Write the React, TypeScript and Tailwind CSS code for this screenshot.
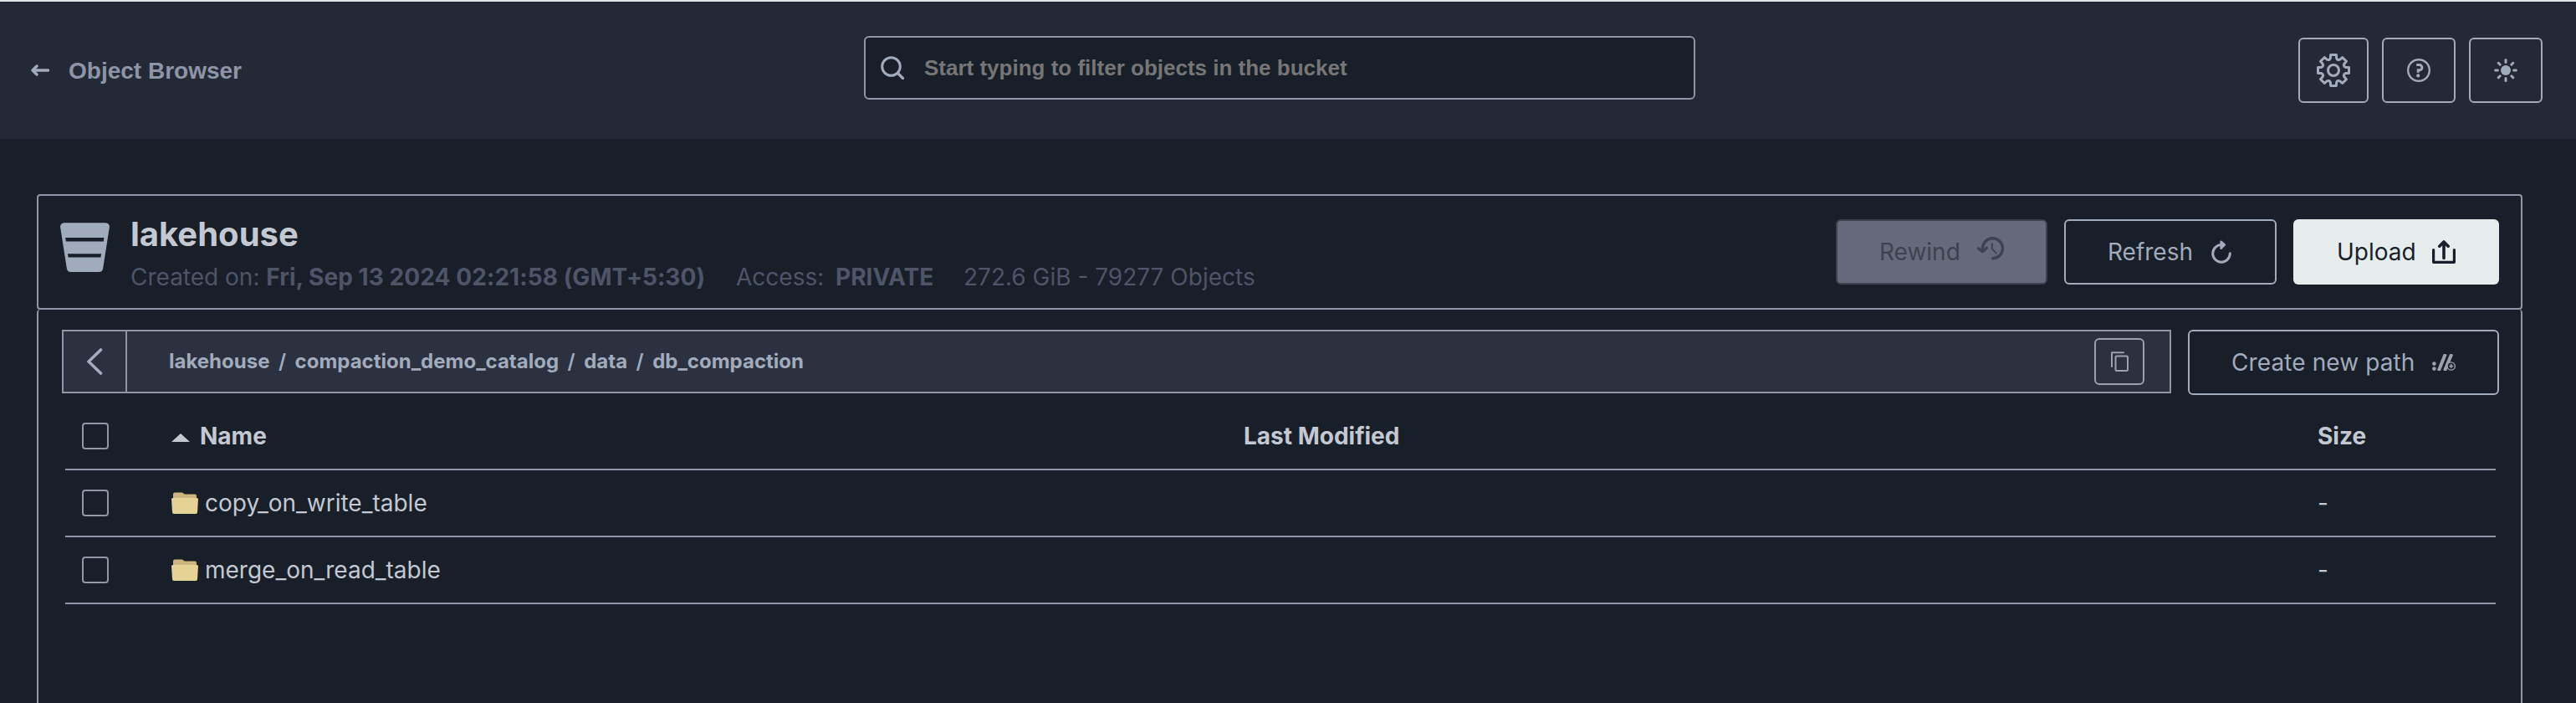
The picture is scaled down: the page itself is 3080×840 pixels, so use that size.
import React from "react";

const FG = "#a0abbc";

function Icon({ w, h, vb, children, className = "" }: { w: number; h: number; vb?: string; children: React.ReactNode; className?: string }) {
  return (
    <svg width={w} height={h} viewBox={vb ?? `0 0 ${w} ${h}`} fill="none" className={`block shrink-0 ${className}`}>
      {children}
    </svg>
  );
}

function gearPath() {
  const pts: string[] = [];
  const c = 20;
  for (let i = 0; i < 8; i++) {
    const a = (i * Math.PI) / 4 - Math.PI / 2;
    const at = (r: number, o: number) => `${(c + r * Math.cos(a) - o * Math.sin(a)).toFixed(2)} ${(c + r * Math.sin(a) + o * Math.cos(a)).toFixed(2)}`;
    pts.push(at(13, -4.5), at(14.6, -3.6), at(18.5, -3.4), at(18.5, 3.4), at(14.6, 3.6), at(13, 4.5));
  }
  return `M${pts.join("L")}Z`;
}

const GearIcon = () => (
  <Icon w={40} h={40}>
    <path d={gearPath()} stroke={FG} strokeWidth="3" strokeLinejoin="round" />
    <circle cx="20" cy="20" r="6.5" stroke={FG} strokeWidth="3" />
  </Icon>
);

const HelpIcon = () => (
  <Icon w={28} h={28}>
    <circle cx="14" cy="14" r="12.8" stroke={FG} strokeWidth="2.4" />
    <path d="M11.2 7.6h3.6a3.1 3.1 0 0 1 0 6.2h-1.6v3" stroke={FG} strokeWidth="3" />
    <circle cx="13.2" cy="20.4" r="2.1" fill={FG} />
  </Icon>
);

const SunIcon = () => (
  <Icon w={28} h={28}>
    <circle cx="14" cy="14" r="6" fill={FG} />
    {[0, 45, 90, 135, 180, 225, 270, 315].map((a) => (
      <path key={a} d="M14 1.6v2.8" stroke={FG} strokeWidth="3" strokeLinecap="round" transform={`rotate(${a} 14 14)`} />
    ))}
  </Icon>
);

const BucketIcon = () => (
  <Icon w={59} h={60} vb="0.3 0 59.4 60">
    <path
      fillRule="evenodd"
      fill={FG}
      d="M5 0h50a4.6 4.6 0 0 1 4.600 5.200L51.800 55a5 5 0 0 1-5 4.300H13.200a5 5 0 0 1-5-4.300L.4 5.200A4.600 4.600 0 0 1 5 0ZM6.500 18l.7 4.400h45.200l.7-4.400ZM9.300 37.200l.7 4.400h39l.7-4.400Z"
    />
  </Icon>
);

const RewindIcon = () => (
  <Icon w={32} h={28} className="relative -top-1">
    <path d="M6.500 13.700A12 12 0 1 1 18.500 25.700" stroke="#3d424f" strokeWidth="3.400" strokeLinecap="round" />
    <path d="M1.600 13.800l5 3.800 4.600-4.200" stroke="#3d424f" strokeWidth="3.400" strokeLinecap="round" strokeLinejoin="round" />
    <path d="M17.800 8v6.500l5 5" stroke="#3d424f" strokeWidth="1.800" strokeLinecap="round" />
  </Icon>
);

const RefreshIcon = () => (
  <Icon w={24} h={28}>
    <path d="M22.300 15.800A10.300 10.300 0 1 1 12.500 5.600" stroke={FG} strokeWidth="3" strokeLinecap="round" />
    <path d="M11.600 1.600l4.300 3.900-4.300 4.300Z" fill={FG} stroke={FG} strokeWidth="2.400" strokeLinecap="round" strokeLinejoin="round" />
  </Icon>
);

const UploadIcon = () => (
  <Icon w={28} h={28}>
    <path d="M1.600 11.500v14.800h24.800V11.500" stroke="#181f2a" strokeWidth="3.200" strokeLinecap="round" strokeLinejoin="round" />
    <path d="M14 21.500V3M8.800 7.200L14 2l5.200 5.200" stroke="#181f2a" strokeWidth="3.600" strokeLinecap="round" strokeLinejoin="round" />
  </Icon>
);

const CopyIcon = () => (
  <Icon w={21} h={24}>
    <path d="M1 18V1.200h14" stroke="#9aa2ab" strokeWidth="2" strokeLinejoin="round" strokeLinecap="round" />
    <rect x="5.500" y="5.500" width="14.500" height="17.500" rx="1.500" stroke="#9aa2ab" strokeWidth="2" />
  </Icon>
);

const PathIcon = () => (
  <Icon w={28} h={20}>
    <circle cx="2.400" cy="11.600" r="2.300" fill="#9aa2ab" />
    <circle cx="2.400" cy="17.600" r="2.300" fill="#9aa2ab" />
    <path d="M7.800 20L15.800 0M15 20L23.300 0" stroke="#9aa2ab" strokeWidth="4" />
    <circle cx="22.700" cy="14.500" r="4.600" fill="#181f28" stroke="#9aa2ab" strokeWidth="1.400" />
    <path d="M22.700 12v5M20.200 14.500h5" stroke="#9aa2ab" strokeWidth="1.600" />
  </Icon>
);

const FolderIcon = () => (
  <Icon w={32} h={26}>
    <path d="M2 9V2.500A2 2 0 0 1 4 .5h8.500c1.500 0 2 2 4 2H28a2 2 0 0 1 2 2V9Z" fill="#cbb580" />
    <path d="M0 8.500A1.500 1.500 0 0 1 1.500 7h29A1.500 1.500 0 0 1 32 8.500L31 24a2 2 0 0 1-2 2H3a2 2 0 0 1-2-2Z" fill="#e4d394" />
  </Icon>
);

const Checkbox = () => <span className="block h-8 w-8 rounded border-2 border-[#8f97a7]" />;

function IconButton({ className, children }: { className: string; children: React.ReactNode }) {
  return <button className={`flex h-[78px] items-center justify-center rounded-md border-2 border-[#a0abbc] ${className}`}>{children}</button>;
}

const COLS = "grid grid-cols-[125px_1284px_1284px_1fr] items-center";

function Row({ name }: { name: string }) {
  return (
    <div className={`${COLS} h-20 border-b-2 border-[#8f97a7] text-[#c4c8d0]`}>
      <span className="pl-5"><Checkbox /></span>
      <span className="flex items-center gap-2 pl-0.5">
        <FolderIcon />
        <span>{name}</span>
      </span>
      <span />
      <span>-</span>
    </div>
  );
}

export default function App() {
  return (
    <div className="flex h-[840px] w-[3080px] flex-col overflow-hidden bg-[#181f28] font-['Inter',sans-serif] text-[28px] leading-[34px]">
      <header className="flex h-[166px] shrink-0 border-t-2 border-[#dfe6e5] bg-[#242a35]">
        <div className="flex w-[1033px] items-start pt-[66px] pl-[37px]">
          <Icon w={22} h={14} className="mt-[9px]">
            <path d="M20.500 7H3M7 2L2 7l5 5" stroke={FG} strokeWidth="3.400" strokeLinecap="round" strokeLinejoin="round" />
          </Icon>
          <span className="ml-[23px] font-['Liberation_Sans',sans-serif] font-bold text-[#8e95a6]">Object Browser</span>
        </div>
        <div className="mt-[41px] flex h-[76px] w-[994px] items-center rounded-md border-2 border-[#8f97a7] bg-[#181f28] pl-[18px]">
          <Icon w={28} h={28}>
            <circle cx="12.500" cy="12.500" r="10.800" stroke={FG} strokeWidth="3" />
            <path d="M20.500 20.500l6 6" stroke={FG} strokeWidth="3.200" strokeLinecap="round" />
          </Icon>
          <span className="ml-6 font-['Liberation_Sans',sans-serif] text-[26px] font-bold text-[#767676]">Start typing to filter objects in the bucket</span>
        </div>
        <div className="ml-auto flex gap-4 pt-[43px] pr-10">
          <IconButton className="w-[84px]"><GearIcon /></IconButton>
          <IconButton className="w-[88px]"><HelpIcon /></IconButton>
          <IconButton className="w-[88px]"><SunIcon /></IconButton>
        </div>
      </header>

      <main className="ml-11 flex w-[2972px] flex-1 flex-col pt-[66px]">
        <section className="flex h-[138px] shrink-0 rounded border-2 border-[#8f97a7] pr-[26px] pl-[26px]">
          <div className="pt-8"><BucketIcon /></div>
          <div className="ml-[25px] flex flex-col pt-[21px]">
            <h1 className="text-[40px] leading-[50px] font-bold text-[#c4c8d0]">lakehouse</h1>
            <div className="mt-[9px] flex text-[#4d5567]">
              <span className="w-[724px] whitespace-nowrap">Created on: <b className="font-bold tracking-[0.08px]">Fri, Sep 13 2024 02:21:58 (GMT+5:30)</b></span>
              <span className="w-[119px]">Access:</span>
              <b className="w-[153px] font-bold">PRIVATE</b>
              <span className="whitespace-nowrap">272.6 GiB - 79277 Objects</span>
            </div>
          </div>
          <div className="ml-auto flex gap-5 pt-7">
            <button className="flex h-[78px] w-[253px] items-center rounded-md border-2 border-[#3d424f] bg-[#646a7a] pl-[50px] text-[#3d424f]">
              <span className="w-[117px] text-left">Rewind</span><RewindIcon />
            </button>
            <button className="flex h-[78px] w-[254px] items-center rounded-md border-2 border-[#a0abbc] pl-[50px] text-[#a0abbc]">
              <span className="w-[124px] text-left">Refresh</span><RefreshIcon />
            </button>
            <button className="flex h-[78px] w-[246px] items-center rounded-md bg-[#e6ecec] pl-[52px] text-[#181f2a]">
              <span className="w-[114px] text-left">Upload</span><UploadIcon />
            </button>
          </div>
        </section>

        <section className="flex-1 rounded-t border-x-2 border-[#8f97a7] pt-6 pr-[26px] pl-7">
          <div className="flex items-start gap-5">
            <div className="flex h-[76px] w-[2522px] items-center border-2 border-[#8f97a7] bg-[#2c313f]">
              <div className="flex h-full w-[76px] items-center justify-center border-r-2 border-[#8f97a7]">
                <Icon w={20} h={32}>
                  <path d="M17.500 2L3 16l14.500 14" stroke={FG} strokeWidth="3.600" strokeLinecap="round" strokeLinejoin="round" />
                </Icon>
              </div>
              <div className="flex flex-1 gap-[10.5px] pl-[50px] text-[24px] font-bold text-[#a0abbc]">
                <span>lakehouse</span><span className="font-semibold">/</span><span>compaction_demo_catalog</span><span className="font-semibold">/</span><span>data</span><span className="font-semibold">/</span><span>db_compaction</span>
              </div>
              <div className="mr-[30px] flex h-14 w-[60px] items-center justify-center rounded-md border-2 border-[#9aa2ab]"><CopyIcon /></div>
            </div>
            <button className="flex h-[78px] w-[372px] items-center rounded-md border-2 border-[#a0abbc] pl-[50px] text-[#a0abbc]">
              <span className="w-[240px] text-left tracking-[0.1px]">Create new path</span><PathIcon />
            </button>
          </div>
          <div className="ml-1 w-[2906px]">
            <div className={`${COLS} h-[90px] border-b-2 border-[#8f97a7] pt-[10px] font-bold text-[#c4c8d0]`}>
              <span className="pl-5"><Checkbox /></span>
              <span className="flex items-center gap-3 pl-0.5">
                <Icon w={22} h={10} className="mt-1"><path d="M0 10L11 0l11 10Z" fill="#c4c8d0" /></Icon>
                <span>Name</span>
              </span>
              <span>Last Modified</span>
              <span>Size</span>
            </div>
            <Row name="copy_on_write_table" />
            <Row name="merge_on_read_table" />
          </div>
        </section>
      </main>
    </div>
  );
}
